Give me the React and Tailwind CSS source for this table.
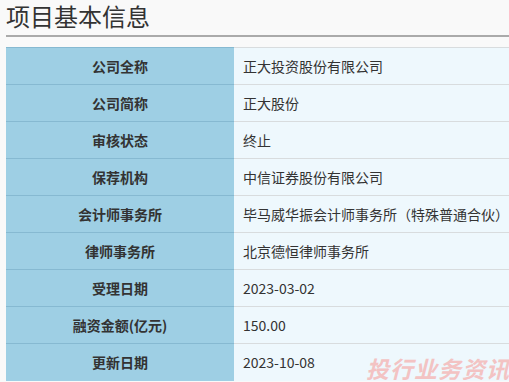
import React from 'react';

const ROWS = [
  ['公司全称', '正大投资股份有限公司'],
  ['公司简称', '正大股份'],
  ['审核状态', '终止'],
  ['保荐机构', '中信证券股份有限公司'],
  ['会计师事务所', '毕马威华振会计师事务所（特殊普通合伙）'],
  ['律师事务所', '北京德恒律师事务所'],
  ['受理日期', '2023-03-02'],
  ['融资金额(亿元)', '150.00'],
  ['更新日期', '2023-10-08'],
];

const App = () => {
  return (
    <div
      className="relative w-[509px] h-[382px] overflow-hidden bg-[#f9f9f9] pl-[6px]"
      style={{ fontFamily: '"Microsoft YaHei", "Noto Sans CJK SC", sans-serif' }}
    >
      <h1 className="pb-[3px] text-[24px] leading-[32px] text-[#333] border-b-2 border-[#aaaaaa]">
        项目基本信息
      </h1>
      <table className="mt-[10px] w-[503px] table-fixed border-collapse text-[14px] text-[#333]">
        <tbody>
          {ROWS.map(([label, value]) => (
            <tr key={label} className="h-[37px]">
              <td className="w-[228px] bg-[#9ecfe4] border-t border-[#86b9d1] text-center font-bold">
                {label}
              </td>
              <td className="bg-[#eef8fd] border-t border-[#d8dcde] pl-[9px] whitespace-nowrap">
                {value}
              </td>
            </tr>
          ))}
        </tbody>
      </table>
      <div className="absolute left-[366px] top-[352px] text-[23px] leading-[32px] font-bold italic text-[#f3c3c3] tracking-[1px] whitespace-nowrap">
        投行业务资讯
      </div>
    </div>
  );
};

export default App;
